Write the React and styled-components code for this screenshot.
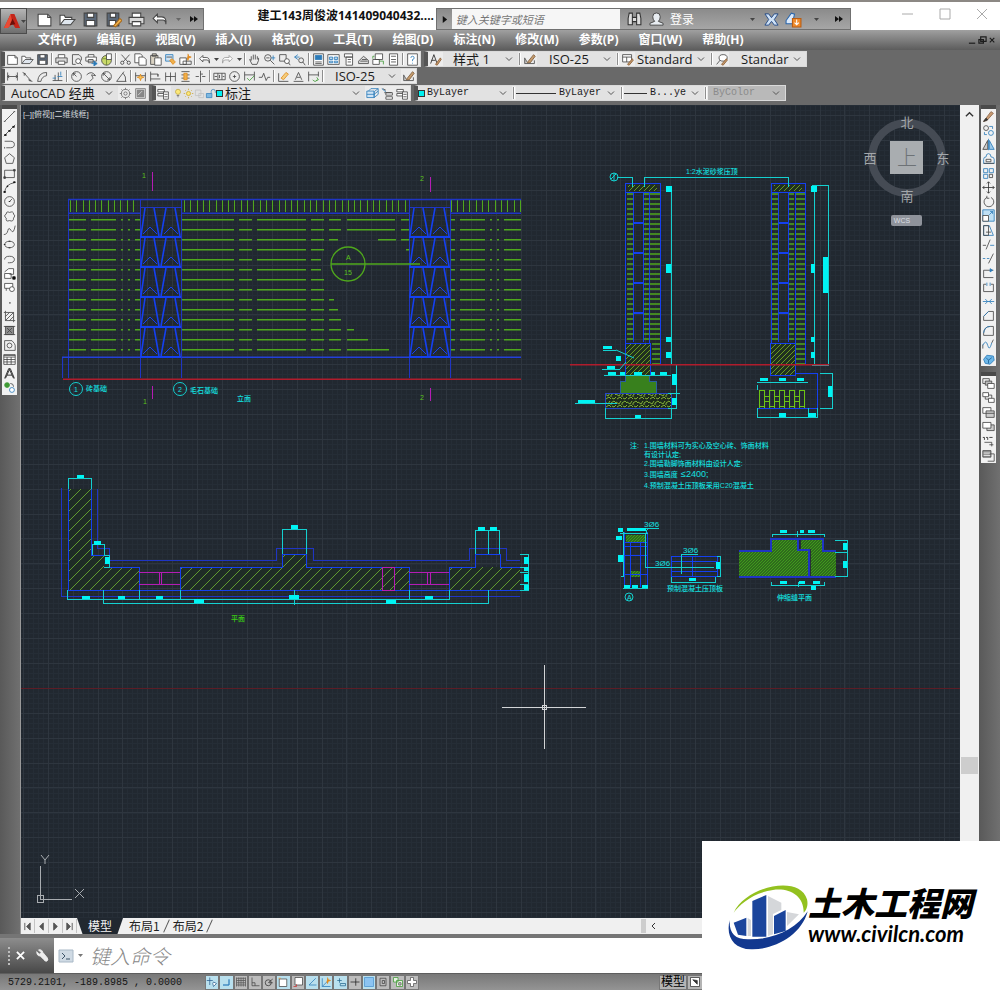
import React from "react";
import styled, { createGlobalStyle } from "styled-components";

const GlobalStyle = createGlobalStyle`
  * {
    box-sizing: border-box;
  }
  body {
    margin: 0;
    background: #696969;
    font-family: "Open Sans", "Noto Sans CJK SC", sans-serif;
  }
  button, input, select {
    font-family: inherit;
    margin: 0;
    padding: 0;
    border: 0;
    background: none;
    outline: none;
  }
`;

const UI = '"Open Sans", "Noto Sans CJK SC", sans-serif';
const MONO = '"Liberation Mono", "Noto Sans CJK SC", monospace';
const K = "#454545";
const B = "#2b7bb9";
const O = "#e08a1e";
const G = "#3f9a35";

/* every icon is a list of [path, stroke, fill] on a 16 x 16 grid */
const ICONS = {
  file: [["M2 3h9l3 3v8H2z", K, "#fff"], ["M11 3v3h3"]],
  open: [["M1 13V4h4l1 2h6v2", K, "#fff"], ["M1 13l4-5h10l-4 5z", K, "#dfe6ee"]],
  save: [["M2 2h12v12H2z", K, "#5b6878"], ["M5 2h6v4H5zM4 9h8v5H4z", K, "#fff"]],
  printer: [["M4 6V2h8v4", K, "#fff"], ["M1 6h14v6H1z", K, "#d8d8d8"], ["M4 10h8v4H4z", K, "#fff"]],
  preview: [["M3 14V2h8l3 3v4M3 14h4"], ["M7 10a3 3 0 1 0 6 0a3 3 0 1 0-6 0M12 12l3 3", K, "#fff"]],
  plot: [["M4 5V2h7v3M1 5h13v5H1zM4 8h6v4H4z", K, "#fff"], ["M8 13h6M11 10l4 3-4 3z", B, B]],
  globe: [["M2 9a6 6 0 1 0 12 0a6 6 0 1 0-12 0", K, "#c9d86a"], ["M3 7h10M8 3v12", "#6f8a30"], ["M8 1h6v7H8z", K, "#fff"]],
  cut: [["M3 2l8 9M13 2L5 11"], ["M2 12a2 2 0 1 0 4 0a2 2 0 1 0-4 0M10 12a2 2 0 1 0 4 0a2 2 0 1 0-4 0"]],
  copy: [["M1 1h7l2 2v9H1z", K, "#fff"], ["M6 5h6l3 3v7H6z", K, "#fff"]],
  paste: [["M2 3h9v11H2zM4 1h5v3H4z", K, "#d9d2c2"], ["M7 6h8v9H7z", K, "#fff"]],
  match: [["M2 2h9v8H2z", B, "#cfe4f5"], ["M3 5h7", K], ["M7 9l4 5 3-3-4-4z", O, "#f0b04a"]],
  block: [["M1 6h8v8H1z", K, "#fff"], ["M5 10h10v4H5z"], ["M11 1l1 3 3 1-3 1-1 3-1-3", O, O]],
  undo: [["M6 3L2 7l4 4V8.500h5q3 0 3 4 1-7-4-7H6z", K, "#fff"]],
  redo: [["M10 3l4 4-4 4V8.500H5q-3 0-3 4-1-7 4-7h4z", "#9a9a9a", "#fff"]],
  hand: [["M4 9V4M6.500 8V2M9 8V2M11.500 8V4M4 9L2 8l3 6h6l2-5V6"]],
  zoom: [["M2 6a4 4 0 1 0 8 0a4 4 0 1 0-8 0M9 9l5 5M4 6h4"], ["M10 6h5M12.500 3v6", B]],
  zoomWin: [["M2 2h8v8H2z"], ["M8 10a3 3 0 1 0 6 0a3 3 0 1 0-6 0M13 12l2 3", K, "#fff"]],
  zoomPrev: [["M7 9a3 3 0 1 0 6 0a3 3 0 1 0-6 0M12 11l3 4"], ["M6 2L2 5l4 3", B], ["M2 5h6", B]],
  props: [["M2 1h12v14H2z", K, "#fff"], ["M4 3h8v5H4z", B, B], ["M4 11h8M4 13h8"]],
  center: [["M1 2h14v12H1z", K, "#fff"], ["M3 5h4v3H3zM9 5h4v3H9zM3 10h4v2H3zM9 10h4v2H9z", B, "#bcd8ef"]],
  palette: [["M3 1h10v4H3zM5 5h8v10H5z", K, "#fff"], ["M7 8h4M7 11h4"]],
  sheet: [["M2 10l6-6 6 5v4H2z", K, "#ddd"], ["M4 10h9M6 8h6"]],
  markup: [["M4 1h9v7H4zM1 8h8v6H1z", K, "#fff"], ["M9 10h5v4M3 4H1v3", G]],
  calc: [["M3 1h10v14H3z", K, "#fff"], ["M5 4h6M5 8h6M5 11h6"]],
  help: [["M2 1h12v14H2z", K, "#fff"], ["M6 6q0-2 2-2t2 2q0 2-2 2v2M8 12v1", B]],
  dimLinear: [["M2 3v10M14 3v10M2 8h12M4 6L2 8l2 2M12 6l2 2-2 2"]],
  dimAligned: [["M2 3l4 2M10 13l4 1M4 4l8 9M4 4v3M12 13l-3-1"]],
  dimArc: [["M2 14Q3 3 13 3M6 14Q7 8 13 7M2 14h4M13 3v4"]],
  dimOrd: [["M2 13h12M5 13V6M9 13V3"], ["M2 10h4M8 8h6M12 2v5", B]],
  radius: [["M2 8a6 6 0 1 0 12 0a6 6 0 1 0-12 0M8 8L4 4M4 7V4h3"]],
  jog: [["M2 6q6-6 11 1M13 7L8 6l2 4-4 4"]],
  diameter: [["M2 8a6 6 0 1 0 12 0a6 6 0 1 0-12 0M4 4l8 8M4 7V4h3M12 9v3H9"]],
  angular: [["M2 14L11 2M2 14h12M10 4q4 4 3 10"]],
  quick: [["M2 3v11M14 3v11M2 7h12"], ["M8 5l1 3 3 1-3 1-1 3-1-3-3-1 3-1z", O, "#f6c65a"]],
  baseline: [["M2 2v12M2 5h9v3M2 11h12M11 5v3"]],
  cont: [["M2 3v11M8 3v11M14 3v11M2 8h12"]],
  space: [["M3 2h10M3 14h10M3 6h10M3 10h10"], ["M6 4h4v8H6z", O, "#f0b04a"]],
  brk: [["M8 1v14M2 8h4M10 8h4M8 5h3"]],
  toler: [["M1 4h14v8H1zM6 4v8M11 4v8M2 8h3M8 6v4M12 8h2"]],
  centerMark: [["M2 8a6 6 0 1 0 12 0a6 6 0 1 0-12 0M8 6v4M6 8h4"]],
  inspect: [["M2 2v11M14 2v11M2 6h12"], ["M5 10l3 3 6-6", G]],
  jogLine: [["M1 9h4l2-5 3 9 2-4h3"]],
  dimEdit: [["M2 4v10h12"], ["M5 10l6-7 3 2-6 7z", O, "#f4ce7c"]],
  textEdit: [["M2 14h12M4 12l4-9 4 9M6 9h4"]],
  update: [["M2 2v12M14 2v6M2 6h12"], ["M7 12q3 4 6 0M12 9l2 3-3 1", G]],
  brush: [["M2 13V6l3 5", "#555", "#bbb"], ["M5 12l8-10 2 2-6 8z", "#7a5a3a", "#c69c6d"], ["M2 13h12V9", K]],
  styleA: [["M2 13L6 2l4 11M3 9h5", "#222"], ["M8 14l6-8 1 2-5 7z", "#8a5a30", "#c69c6d"]],
  tableStyle: [["M2 2h11v9H2zM2 5h11M7 5v6", K, "#fff"], ["M8 14l6-7 1 2-5 6z", "#8a5a30", "#c69c6d"]],
  leader: [["M2 14l5-6"], ["M5 6q0-4 5-4t5 4-5 4-5-4", K, "#fff"], ["M8 14l6-7 1 2-5 6z", "#8a5a30", "#c69c6d"]],
  gear: [["M3 8a5 5 0 1 0 10 0a5 5 0 1 0-10 0M6 8a2 2 0 1 0 4 0a2 2 0 1 0-4 0M8 1v2M8 13v2M1 8h2M13 8h2M3 3l1 1M12 12l1 1M13 3l-1 1M4 12l-1 1", "#666"]],
  space2: [["M2 2h12v12H2z", "#777", "#ddd"], ["M4 4h8v8H4z", "#777", "#888"], ["M5 10l5-5", "#ddd"]],
  layers: [["M1 3h8v3H1zM1 8h8v3H1z", K, "#fff"], ["M8 6h6v9H8zM9 9h4M9 12h4", K, "#fff"]],
  bulb: [["M4 6a4 4 0 1 1 8 0q0 2-2 4H6Q4 8 4 6z", "#b39a2c", "#fbe779"], ["M6 12h4M7 14h2"]],
  sun: [["M5 8a3 3 0 1 0 6 0a3 3 0 1 0-6 0", "#c9a020", "#fbe779"], ["M8 1v2M8 13v2M1 8h2M13 8h2M3 3l1 1M12 12l1 1M13 3l-1 1M4 12l-1 1", "#c9a020"]],
  faint: [["M2 3h8v8H2zM7 8h7v6H7z", "#bdbdbd"]],
  lock: [["M2 8h8v6H2z", B, "#7fb8e0"], ["M9 8V5q0-3 3-3t3 3v2", B]],
  layerA: [["M1 13h9V5H1z", B, "#cfe4f5"], ["M3 5l3-3h9l-4 3M10 13l5-4V2M10 9l5-4M1 9h9M10 5v8", B]],
  layerB: [["M2 2l4 2M4 7h9M6 7h8v3H6zM6 12h8v3H6z", K, "#fff"], ["M1 2l5 4", B]],
  line: [["M2 14L14 2"], ["M1 14h2M13 2h2"]],
  xline: [["M1 15L15 1"], ["M2 13h2v1H2zM7 8h2v1H7zM12 3h2v1h-2z", "#111", "#111"]],
  pline: [["M2 4h7q5 0 5 4t-5 4H4M2 11v2"]],
  polygon: [["M8 2l6 5-2 7H4L2 7z"]],
  rect: [["M2 4h12v9H2z"], ["M1 12h2v2H1zM13 3h2v2h-2z", K, K]],
  arc: [["M2 14Q3 4 14 2"], ["M1 13h2v1H1zM5 6h1v1H5zM13 1h2v1h-2z", "#111", "#111"]],
  circle: [["M2 8a6 6 0 1 0 12 0a6 6 0 1 0-12 0M8 8l3-3"], ["M7 8h2", "#111"]],
  cloud: [["M4 5q0-4 4-2 5-2 5 2 3 2 0 5 0 5-5 3-5 2-4-3-4-3 0-5z"]],
  spline: [["M1 13q4 0 5-5t4 0 5-6"]],
  ellipse: [["M2 8a6 4 0 1 0 12 0a6 4 0 1 0-12 0"], ["M7 4h2M7 12h2M1 8h2", "#111"]],
  ellArc: [["M2 8q0-4 6-4t6 4-6 4M6 12h2"]],
  insert: [["M2 6l5-4h6v7H8M2 8h8v6H2z", K, "#fff"], ["M12 12h3v3h-3z", "#111", "#111"]],
  makeBlock: [["M2 3h10v6H2z", K, "#fff"], ["M8 10a3 3 0 1 0 6 0a3 3 0 1 0-6 0M4 9v3", K, "#fff"]],
  point: [["M8 8h1v1H8z", "#555"]],
  hatch: [["M3 3h10v10H3zM3 8l5-5M3 13L13 3M8 13l5-5M1 3h2M13 13h2M3 1v2M13 13v2"]],
  gradient: [["M3 3h10v10H3z", K, "#8d8d8d"], ["M1 3h14M1 13h14M5 5l6 6M11 5l-6 6"]],
  region: [["M2 2h9q4 4 4 6v6H2z"], ["M5 8a3 3 0 1 0 6 0a3 3 0 1 0-6 0"]],
  table: [["M1 2h14v12H1z", K, "#fff"], ["M1 5h14M5 5v9M10 5v9M1 8h14M1 11h14"], ["M1 3h14", K]],
  mtext: [["M2 14L7 2h2l5 12M5 10h6M3 14L8 3l5 11", "#111"]],
  addSel: [["M2 5a3 3 0 1 0 6 0a3 3 0 1 0-6 0", G, G], ["M8 11a3 3 0 1 0 6 0a3 3 0 1 0-6 0", B, "#fff"], ["M9 3q4 0 4 4"]],
  erase: [["M2 14l9-12 3 2-8 9z", "#8a6446", "#c79a72"], ["M2 14l3-4 2 2z", "#333", "#333"]],
  copyObj: [["M2 5a3 3 0 1 0 6 0a3 3 0 1 0-6 0"], ["M8 11a3 3 0 1 0 6 0a3 3 0 1 0-6 0M9 3h4v3M3 10v3h3", B]],
  mirror: [["M7 3v11H1z", K, "#ccc"], ["M9 3v11h6z", B, "#9cc9ea"], ["M8 1v14", B]],
  offset: [["M2 14V9q0-3 3-3 0-4 3-4t3 4q4 0 4 3v5z", B], ["M5 12h6V9H5z"], ["M2 14h13", K]],
  array: [["M2 2h5v5H2zM9 2h5v5H9zM2 9h5v5H2z", B], ["M9 9h4v4H9z", K]],
  move: [["M8 1v14M1 8h14M6 3l2-2 2 2M6 13l2 2 2-2M3 6L1 8l2 2M13 6l2 2-2 2", "#333"]],
  rotate: [["M6 3a6 6 0 1 0 5 0M6 1v3h3"]],
  scale: [["M1 1h14v14H1z", B, "#bfe0f5"], ["M1 8h7v7H1z", K, "#fff"], ["M9 7l4-4M10 3h3v3", B]],
  stretch: [["M2 2h7l5 12H2z", B], ["M2 14V2h6v12z", K], ["M5 10h6"]],
  trim: [["M1 9h4", K], ["M10 9h5", B], ["M5 14L10 2"]],
  extend: [["M1 8h3M6 8h3", B], ["M8 14L14 2"]],
  breakPt: [["M14 4H2v9h12", K], ["M10 2l3 2-3 2z", B, B]],
  breakObj: [["M5 4H2v9h12V4h-3"], ["M6 2v4M10 2v4", B]],
  join: [["M1 8h14", B], ["M4 5l3 3-3 3M12 5L9 8l3 3", B]],
  chamfer: [["M2 14V9l6-6h6v11z"], ["M2 9l6-6", B]],
  fillet: [["M2 14V11q1-8 8-8h4v11z"], ["M2 11q1-8 8-8", B]],
  blend: [["M1 13V8"], ["M1 9q4-8 6 0t5-3", B], ["M12 6l2-4"]],
  explode: [["M2 9l4-5 8 1 1 5-5 5-6-1z", B, "#6db7e8"], ["M5 7l3 3 4-3M8 10v4", "#1c5f94"]],
  front: [["M1 2h8v6H1z", K, "#eee"], ["M4 5h8v5H4z", K, "#bbb"], ["M7 8h8v6H7z", K, "#fff"]],
  back: [["M4 5h8v5H4z", K, "#eee"], ["M1 2h7v5H1zM8 9h7v5H8z", K, "#fff"]],
  above: [["M1 2h10v7H1z", K, "#fff"], ["M5 6h10v8H5z", K, "#ccc"], ["M5 9h10"]],
  under: [["M6 6h9v7H6z", K, "#ccc"], ["M1 3h10v7H1z", K, "#fff"]],
  annot: [["M1 3h2v3M5 3h2v3M9 3h4", "#222"], ["M3 9h9v5M9 12h5"]],
  hatchBack: [["M1 2h10v8H1z", K, "#999"], ["M9 6h6v9H7"], ["M2 5h8M2 8h8", "#eee"]],
  snap: [["M5 2v10M1 6h8M10 8l4 2-4 4-1-4z", "#2b5f8f", "#fff"]],
  corner: [["M12 4v8H4M12 5v7H4", B]],
  grid: [["M2 2v12M5 2v12M8 2v12M11 2v12M14 2v12M2 3h12M2 6h12M2 9h12M2 12h12", "#555"]],
  ortho: [["M4 2v11h10M4 9h4v4"]],
  polar: [["M3 9a4 4 0 1 0 8 0a4 4 0 1 0-8 0M7 9l6-5M13 9H8", "#333"]],
  osnap: [["M3 4h10v10H3z", K, "#fff"], ["M2 3h3", O]],
  osnap3: [["M4 2h10v10H4z", K, "#fff"], ["M2 14h4v-3", "#c33"]],
  otrack: [["M13 3L4 12h10", B]],
  ducs: [["M3 3v11h11M3 14l6-6", B], ["M10 2l1 3 3 1-3 1-1 3-1-3", O, O]],
  dyn: [["M3 6h6M6 3v6M7 10h7v3H7z", "#26688f"]],
  lwt: [["M2 8h12M9 3v10", "#222"]],
  tpy: [["M2 2h12v12H2z", "#4c94cf", "#8cc4f2"]],
  qp: [["M4 3h8v10H4zM7 6h3v4H7z", "#444"]],
  sc: [["M2 2h6v6H2zM6 6h8v8H6z", G, "#e8f2e4"], ["M9 9h3v3H9z", K]],
  am: [["M6 2h4v4h4v4h-4v4H6v-4H2V6h4z", "#555", "#fff"]],
  model: [["M2 2h12v12H2z", "#333", "#fff"], ["M5 5l6 6V6z", "#333", "#333"]],
  binoculars: [["M2 13V7l1-5h3v11zM14 13V7l-1-5h-3v11zM6 6h4v4H6z", "#333", "#ddd"]],
  user: [["M4 5a4 4 0 1 1 8 0q0 3-2 5l5 2v2H1v-2l5-2Q4 8 4 5z", "#444", "#e8edf2"]],
  exchange: [["M1 2h4l3 4 3-4h4l-4 6 4 6h-4l-3-4-3 4H1l4-6z", "#234a86", "#cfe2f7"]],
  cloudDown: [["M1 12V9l5-7 3 1-1 4h5v5z", "#2b67ad", "#dceafa"], ["M7 7h8v8H7z", "#b95c12", "#ee8a2a"], ["M11 8v5M9 11l2 2 2-2", "#fff"]],
  wrench: [["M2 3l3 3 2-2-3-3q4-1 5 3l5 6q2 3-1 4-2 0-3-2L6 8Q2 8 2 3z", "#eee", "#eee"]],
  prompt: [["M1 2h14v12H1z", "#a8b8c6", "#cfdae4"], ["M4 5l3 3-3 3M8 11h4", "#3d5468"]],
  editSave: [["M2 2h11v12H2z", K, "#5b6878"], ["M5 2h5v4H5zM4 9h6v5H4z", K, "#fff"], ["M8 14l6-7 2 2-6 6z", "#a6681b", "#f2b24a"]],
};

const Svg = styled.svg`
  display: block;
  flex: none;
  width: ${(p) => p.$size}px;
  height: ${(p) => p.$size}px;
`;

const Icon = ({ name, size = 13 }) => (
  <Svg $size={size} viewBox="0 0 16 16" aria-hidden="true">
    {ICONS[name].map(([d, stroke = K, fill = "none"], i) => (
      <path key={i} d={d} stroke={stroke} fill={fill} strokeWidth="1" />
    ))}
  </Svg>
);

const Page = styled.div`
  position: relative;
  display: flex;
  flex-direction: column;
  background: #696969;
  overflow: hidden;
`;

const TitleBar = styled.header`
  display: flex;
  align-items: stretch;
  height: 30px;
  padding-top: 6px;
  background: #fff;
  border-top: 2px solid #8c8884;
`;

const AppButton = styled.button`
  position: relative;
  z-index: 1;
  display: flex;
  align-items: center;
  width: 27px;
  height: 26px;
  padding-left: 3px;
  border: 1px solid #4c4c4c;
  background: linear-gradient(#b5b5b5, #6e6e6e);
`;

const QuickAccess = styled.div`
  display: flex;
  align-items: center;
  width: 177px;
  padding-left: 6px;
  background: linear-gradient(#8b8b8b, #a6a6a6);
  border: 1px solid #707070;
  border-left: 0;
`;

const QuickButton = styled.button`
  display: flex;
  align-items: center;
  justify-content: center;
  width: ${(p) => (p.$narrow ? 15 : 23)}px;
  height: 20px;
  color: #222;
  font-size: 11px;
`;

const Title = styled.h1`
  flex: 1;
  margin: 0;
  padding-right: 2px;
  color: #111;
  font-size: 12px;
  font-weight: 700;
  line-height: 16px;
  text-align: right;
  white-space: nowrap;
`;

const InfoCenter = styled.div`
  display: flex;
  align-items: center;
  width: 415px;
  background: linear-gradient(#8b8b8b, #a6a6a6);
  border: 1px solid #707070;
`;

const Search = styled.input`
  width: 172px;
  height: 20px;
  margin-right: 4px;
  padding-left: 4px;
  background: #f6f6f6;
  font-size: 11px;
  font-style: italic;
  &::placeholder {
    color: #777;
    opacity: 1;
  }
`;

const SignIn = styled.button`
  display: flex;
  align-items: center;
  gap: 6px;
  width: 102px;
  padding-left: 3px;
  color: #fff;
  font-size: 12px;
`;

const WindowButtons = styled.div`
  display: flex;
  justify-content: flex-end;
  width: 149px;
`;

const WindowButton = styled.button`
  display: flex;
  justify-content: center;
  width: 37px;
  height: 12px;
`;

const MenuBar = styled.nav`
  display: flex;
  align-items: center;
  gap: 20px;
  height: 20px;
  padding: 0 3px 0 38px;
  background: linear-gradient(#a0a0a0, #5c5c5c);
`;

const MenuLink = styled.a`
  color: #fff;
  font-size: 12px;
  font-weight: 700;
  line-height: 20px;
  text-decoration: none;
  white-space: nowrap;
`;

const DocButtons = styled.div`
  display: flex;
  gap: 1px;
  margin-left: auto;
`;

const ToolbarArea = styled.div`
  display: flex;
  flex-direction: column;
  gap: 1px;
  padding: 1px 0 4px;
`;

const ToolbarRow = styled.div`
  display: flex;
  gap: 3px;
  padding-left: 1px;
`;

const Toolbar = styled.div`
  display: flex;
  align-items: center;
  height: 16px;
  background: #ececec;
  border: 1px solid #dadada;
  border-left: 4px solid #555;
`;

const ToolButton = styled.button`
  display: flex;
  align-items: center;
  justify-content: center;
  flex: none;
  width: ${(p) => p.$width || 15}px;
  height: 14px;
`;

const Divider = styled.span`
  width: 2px;
  height: 12px;
  margin: 0 1px;
  border-left: 1px solid #8e8e8e;
  border-right: 1px solid #fff;
`;

const Combo = styled.label`
  display: flex;
  align-items: center;
  width: ${(p) => p.$width}px;
  height: 14px;
  padding: 0 5px 0 ${(p) => p.$pad || 0}px;
  background: ${(p) => (p.$off ? "#b9b9b9" : "#e2e2e2")};
  overflow: hidden;
`;

const Select = styled.select`
  flex: 1;
  min-width: 0;
  height: 14px;
  appearance: none;
  color: ${(p) => (p.disabled ? "#8b8b8b" : "#1b1b1b")};
  opacity: 1;
  font-family: ${(p) => (p.$mono ? MONO : UI)};
  font-size: ${(p) => (p.$mono ? 10 : 13)}px;
  line-height: 14px;
`;

const Swatch = styled.span`
  flex: none;
  width: 7px;
  height: 7px;
  margin-right: 2px;
  background: #00f0f0;
  border: 1px solid #333;
`;

const LinePreview = styled.span`
  flex: none;
  width: ${(p) => p.$width}px;
  height: 1px;
  margin-right: 3px;
  background: #333;
`;

const Chevron = () => (
  <Svg $size={8} viewBox="0 0 8 8" aria-hidden="true">
    <path d="M1 2.500L4 5.500L7 2.500" fill="none" stroke="#555" />
  </Svg>
);

const Workspace = styled.main`
  display: flex;
  align-items: stretch;
`;

const Dock = styled.aside`
  flex: none;
  display: flex;
  flex-direction: column;
  gap: 6px;
  width: ${(p) => p.$width}px;
  padding: 0 0 0 2px;
  background: linear-gradient(90deg, #595959, #707070);
`;

const Palette = styled.div`
  display: flex;
  flex-direction: column;
  align-items: center;
  justify-content: space-between;
  width: 15px;
  height: ${(p) => p.$height}px;
  background: #f1f1f1;
  border-top: 4px solid #4a4a4a;
`;

const Viewport = styled.section`
  flex: 1;
  min-width: 0;
  border-left: 1px solid #9a9a9a;
`;

const Canvas = styled.svg`
  display: block;
  width: 100%;
  background: #212830;
`;

const ScrollTrack = styled.div`
  display: flex;
  flex-direction: column;
  align-items: center;
  flex: none;
  width: 19px;
  padding-top: 5px;
  background: #f0f0f0;
`;

const ScrollThumb = styled.span`
  width: 17px;
  height: 17px;
  margin-top: 638px;
  background: #cdcdcd;
`;

const TabBar = styled.div`
  display: flex;
  align-items: center;
  height: 16px;
  background: #f0f0f0;
`;

const StepButton = styled.button`
  display: flex;
  align-items: center;
  justify-content: center;
  width: 14px;
  height: 14px;
  border-right: 1px solid #c4c4c4;
`;

const Tab = styled.button`
  height: 16px;
  padding: 0 ${(p) => (p.$active ? 11 : 6)}px;
  color: ${(p) => (p.$active ? "#f4f4f4" : "#222")};
  background: ${(p) => (p.$active ? "#212830" : "none")};
  clip-path: ${(p) => (p.$active ? "polygon(0 0, 100% 0, 88% 100%, 12% 100%)" : "none")};
  font-family: "Noto Sans CJK SC", sans-serif;
  font-size: 12px;
  line-height: 14px;
`;

const Slash = styled.span`
  width: 1px;
  height: 14px;
  background: #555;
  transform: rotate(24deg);
`;

const HScroll = styled.div`
  display: flex;
  align-items: center;
  width: 319px;
  height: 14px;
  margin-left: auto;
  padding-left: 4px;
  border-left: 5px solid #cdcdcd;
`;

const CommandLine = styled.div`
  display: flex;
  height: 39px;
  background: #fff;
  border-top: 4px solid #757575;
`;

const CommandGrip = styled.div`
  display: flex;
  align-items: center;
  gap: 6px;
  width: 54px;
  padding-left: 8px;
  background: linear-gradient(#8d8d8d, #484848);
`;

const Dots = styled.span`
  height: 18px;
  border-left: 2px dotted #bdbdbd;
`;

const GripButton = styled.button`
  display: flex;
  margin-right: ${(p) => p.$gap || 0}px;
`;

const PromptButton = styled.button`
  display: flex;
  align-items: center;
  gap: 4px;
  width: 36px;
  padding-left: 4px;
`;

const CommandInput = styled.input`
  flex: 1;
  font-family: "Noto Sans CJK SC", sans-serif;
  font-size: 20px;
  font-style: italic;
  font-weight: 300;
  &::placeholder {
    color: #888;
    opacity: 1;
  }
`;

const StatusBar = styled.footer`
  display: flex;
  align-items: center;
  height: 17px;
  padding-left: 8px;
  background: linear-gradient(#787878, #949494);
  border-top: 1px solid #5e5e5e;
`;

const Coords = styled.span`
  width: 197px;
  color: #151515;
  font-family: ${MONO};
  font-size: 10px;
  white-space: pre;
`;

const StatusGroup = styled.div`
  display: flex;
  width: 214px;
`;

const StatusButton = styled.button`
  display: flex;
  align-items: center;
  justify-content: center;
  flex: 1;
  height: 15px;
  border: 1px solid #777;
  background: ${(p) => (p.$on ? "#b9e0ee" : "#bcbcbc")};
`;

const ModelGroup = styled.div`
  display: flex;
  align-items: center;
  width: 341px;
  margin-left: auto;
`;

const ModelButton = styled.button`
  display: flex;
  align-items: center;
  height: 15px;
  padding: 0 1px;
  background: #b4b4b4;
  border: 1px solid #777;
  font-size: 12px;
  line-height: 14px;
`;

const Watermark = styled.div`
  position: absolute;
  right: 0;
  bottom: 0;
  display: flex;
  align-items: center;
  width: 298px;
  height: 149px;
  padding-left: 26px;
  background: #fff;
`;

const BrandText = styled.div`
  display: flex;
  flex-direction: column;
  color: #000;
  font-style: italic;
  white-space: nowrap;
`;

const BrandName = styled.strong`
  font-family: "Liberation Sans", "Noto Sans CJK SC", sans-serif;
  font-size: 33px;
  font-weight: 900;
  line-height: 36px;
`;

const BrandUrl = styled.span`
  font-family: Lato, "Open Sans", sans-serif;
  font-size: 22px;
  font-weight: 700;
  line-height: 22px;
`;

/* ---- model space ---- */

const BLUE = "#1440f0";
const NAVY = "#1f35c4";
const GREEN = "#4fa81c";
const CYAN = "#14d0d0";
const MAGENTA = "#b41cb4";
const RED = "#b01c2c";

const range = (a, b, step) => {
  const out = [];
  for (let v = a; v <= b; v += step) out.push(v);
  return out;
};

const rowsPath = (segs, y) => segs.map(([a, b]) => `M${a} ${y}H${b}`).join("");

const minorGrid =
  range(22.8, 960, 4.98).map((x) => `M${Math.round(x)} 105V918`).join("") +
  range(105.4, 918, 4.98).map((y) => `M21 ${Math.round(y)}H960`).join("");
const majorGrid =
  range(22.8, 960, 24.9).map((x) => `M${Math.round(x)} 105V918`).join("") +
  range(115.2, 918, 24.9).map((y) => `M21 ${Math.round(y)}H960`).join("");

const brickEdge = [...range(70, 136, 6.3), ...range(184, 409, 6.3), ...range(450.5, 521, 6.3)]
  .map((x) => `M${Math.round(x)} 200V212`)
  .join("");

const wallSegs = [
  [68, 86], [91, 116], [121, 123], [128, 130], [135, 140],
  [182, 234], [239, 252], [257, 306], [311, 321],
  [451, 455], [460, 485], [490, 492], [497, 499], [504, 521],
];
const wallExtra = [
  [[321, 324], [329, 341], [347, 395], [401, 409]],
  [[321, 324], [329, 341], [347, 395], [401, 409]],
  [[321, 324], [329, 338], [378, 396], [401, 409]],
  [[321, 324], [406, 409]],
  [],
  [],
  [[321, 324]],
  [[321, 324]],
  [[321, 324], [329, 334]],
  [[321, 324], [329, 338]],
  [[321, 324], [329, 341]],
  [[321, 324], [329, 341], [347, 354]],
  [[321, 324], [329, 341], [347, 368]],
  [[321, 324], [329, 341], [347, 389]],
];
const wallRows = wallExtra.map((extra, i) => rowsPath([...wallSegs, ...extra], 219.8 + i * 10)).join("");

const Boxes = ({ list }) =>
  list.map(([x, y, w, h], i) => <rect key={i} x={x} y={y} width={w} height={h} fill="#00f4f4" />);

const Pillar = ({ x }) => (
  <g transform={`translate(${x} 207)`} fill="none" stroke={BLUE}>
    <path d="M0.500 -8V171M41.500 -8V171M0 0.500H41" stroke={NAVY} />
    {range(0, 120, 30).map((y) => (
      <g key={y} transform={`translate(0 ${y})`}>
        <path d="M1 29L5 1M14 1L19 29M21 29L26 1M35 1L40 29" strokeWidth="1.6" />
        <path d="M3 27L10 20L17 27M24 27L31 20L38 27" />
        <path d="M0 30H41" strokeWidth="2" />
      </g>
    ))}
  </g>
);

const Elevation = () => (
  <g fill="none">
    <path d={wallRows} stroke={GREEN} strokeWidth="1.4" />
    <path d={brickEdge} stroke={GREEN} shapeRendering="crispEdges" />
    <path d="M68 199.600H521M68 213.300H140M181 213.300H409M450 213.300H521" stroke={NAVY} strokeWidth="1.5" />
    <path d="M68 199V378M62 357V378" stroke={NAVY} shapeRendering="crispEdges" />
    <path d="M62 357.200H521" stroke="#2340d8" strokeWidth="1.5" />
    <path d="M63 379.300H521" stroke={RED} strokeWidth="1.5" />
    <path d="M152 172V191M152 386V399M430 177V192M430 388V401" stroke={MAGENTA} shapeRendering="crispEdges" />
    <Pillar x={140} />
    <Pillar x={409} />
    <circle cx="348" cy="264" r="17" stroke={GREEN} strokeWidth="1.3" />
    <path d="M331 264H420" stroke={GREEN} strokeWidth="1.4" />
    <circle cx="76" cy="389" r="6.500" stroke={CYAN} />
    <circle cx="180" cy="389" r="6.500" stroke={CYAN} />
  </g>
);

const rungs = (cols, from, to) =>
  range(from, to, 5).map((y) => cols.map(([a, b]) => `M${a} ${y}H${b}`).join("")).join("");

const Sections = () => (
  <g fill="none">
    <path
      d={
        rungs([[627, 633], [643, 660], [772, 778], [788, 794], [796, 805]], 194, 341) +
        rungs([[652, 660], [796, 805]], 344, 364)
      }
      stroke={GREEN}
      strokeWidth="1.3"
    />
    <g shapeRendering="crispEdges">
      <path d="M625 183H660V365M625 183V375M633 192V342M643 192V342M649 192V375M625 192H660" stroke={BLUE} />
      <path d="M771 183H805V365M771 183V375M778 192V342M788 192V342M795 192V375M771 192H805M795 373H817V408" stroke={BLUE} />
      <path d="M633 223H643M633 253H643M633 283H643M633 313H643M778 223H788M778 253H788M778 283H788M778 313H788" stroke={BLUE} strokeWidth="2" />
      <rect x="628" y="185" width="29" height="6" fill="url(#hatchFine)" />
      <rect x="774" y="185" width="28" height="6" fill="url(#hatchFine)" />
      <rect x="625" y="343" width="25" height="32" fill="url(#hatchFine)" stroke={BLUE} />
      <rect x="770" y="343" width="25" height="32" fill="url(#hatchFine)" stroke={BLUE} />
      <path d="M625 375H649V381H656V393H620V381H625Z" fill="#38801d" stroke="#2a5fa0" />
      <rect x="605" y="393" width="66" height="15" fill="url(#gravel)" stroke="#2446c8" />
      <path d="M757 408H817" stroke={BLUE} />
      <path
        d="M759 390V408M764 390V408M769 390V408M774 390V408M779 390V408M784 390V408M789 390V408M794 390V408M799 390V408M804 390V408M759 390H764M769 390H774M779 390H784M789 390H794M799 390H804M764 396H769M774 396H779M784 396H789M794 396H799M759 406H764M769 406H774M779 406H784M789 406H794M799 406H804M764 401H769M774 401H779M784 401H789M794 401H799"
        stroke="#6cc414"
      />
      <path
        d="M617 177H632V187M644 187V177H788V187M671 187V365M814 187V365M812 185H828V365H812M605 408V418H671V408M604 375H671M676 364V408H668M668 393H680M575 403H617M603 350H616M602 369H620M757 382H808M757 385V390M757 408V417H817V408M808 408V417M820 373H832V408H820"
        stroke={CYAN}
      />
    </g>
    <path d="M570 364.800H829" stroke={RED} strokeWidth="1.5" />
    <path d="M616 350L634 358M620 369L626 362" stroke={CYAN} />
    <circle cx="614" cy="177" r="4" stroke={CYAN} />
    <path d="M611 179L616 174M614 173V181" stroke={CYAN} />
    <Boxes
      list={[
        [666, 186, 6, 6], [666, 264, 5, 9], [666, 337, 5, 5], [666, 352, 5, 6],
        [811, 186, 6, 6], [811, 264, 4, 9], [811, 337, 4, 5], [811, 352, 4, 6], [823, 257, 5, 36],
        [603, 346, 9, 3], [607, 366, 8, 3], [616, 356, 5, 5],
        [608, 372, 8, 3], [620, 372, 5, 3], [634, 372, 8, 3], [651, 372, 4, 3], [660, 372, 7, 3],
        [672, 374, 5, 11], [672, 398, 5, 7], [578, 400, 17, 3], [635, 415, 6, 3],
        [760, 378, 8, 3], [779, 378, 7, 3], [797, 378, 7, 3], [779, 413, 7, 4], [808, 413, 8, 4], [828, 386, 4, 11],
      ]}
    />
  </g>
);

const Plan = () => (
  <g fill="none" shapeRendering="crispEdges">
    <path d="M68 489H91V555H104V567H139V590H68Z" fill="url(#hatch)" />
    <path d="M180 567H282V554H306V567H409V590H180Z" fill="url(#hatch)" />
    <path d="M449 567H520V590H449Z" fill="url(#hatch)" />
    <path d="M68 489V590H139V567H109M91 489V555H104M180 567H282V554H306V567H409V590H180ZM139 590H180M409 590H449M449 590V567H475V554H500V567H520M449 590H520" stroke={BLUE} />
    <path d="M61 488V596H520M97 489V548H109V560H276V548H313V560H469V548H506V560H520" stroke={NAVY} />
    <path d="M139 572H180M139 584H180M159 572V584M161 572V584M409 572H449M409 584H449M427 572V584M430 572V584M382 567H394V590H382Z" stroke={MAGENTA} />
    <path
      d="M68 489V478H91V489M92 555V544H104V555H109V567H104M282 554V529H306V554M475 554V530H499V554M488 530V554M67 590V599H449V590M103 590V603H488V590M139 590V599M180 590V599M294 590V605M409 590V599M520 554H528V590H520M520 567H528M520 572H528M520 584H528"
      stroke={CYAN}
    />
    <Boxes
      list={[
        [77, 475, 7, 3], [94, 541, 7, 4], [105, 557, 5, 7], [291, 525, 7, 4], [478, 527, 7, 4], [490, 527, 7, 4],
        [82, 596, 8, 3], [118, 596, 7, 3], [156, 596, 7, 3], [289, 595, 10, 4], [425, 596, 8, 3],
        [194, 599, 10, 4], [386, 600, 10, 4],
        [524, 557, 5, 7], [524, 567, 5, 4], [524, 574, 5, 8], [524, 585, 5, 5],
      ]}
    />
  </g>
);

const Details = () => (
  <g fill="none" shapeRendering="crispEdges">
    <rect x="626" y="535" width="20" height="7" fill="url(#green)" />
    <rect x="631" y="571" width="10" height="6" fill="url(#green)" />
    <path d="M624 532V587M630 542V587M640 542V587M647 532V587M624 542H647M624 546H647M624 555H647M624 574H647" stroke={BLUE} />
    <path d="M671 556H717V576H671ZM671 561H717M671 571H717M692 556V576" stroke={BLUE} strokeWidth="1" />
    <path d="M739 552H772V540H797V551H808V576H739Z" fill="url(#green)" />
    <path d="M801 540H823V552H836V576H811V549H801Z" fill="url(#green)" />
    <path d="M739 551H771V539H823V551H836M798 540V550H809V577M739 577H836" stroke={NAVY} strokeWidth="2" />
    <path
      d="M644 528H659M648 528L645 535V567H714M620 533H648M623 532V576H621M623 588H648M681 574V554H698M671 577V582H715V577M717 556H720V576H717M772 537V534H824V537M797 531V537M835 540H847V576H835M835 552H847M771 582V585H824V582M798 582V587"
      stroke={CYAN}
    />
    <g shapeRendering="auto">
      <circle cx="629" cy="597" r="4" stroke={CYAN} />
    </g>
    <Boxes
      list={[
        [618, 528, 5, 4], [627, 528, 19, 3], [616, 536, 6, 4], [618, 555, 5, 7], [624, 585, 6, 3], [632, 585, 6, 3], [642, 585, 6, 3],
        [716, 562, 4, 7], [689, 578, 7, 3], [780, 530, 7, 3], [800, 530, 4, 3], [808, 530, 7, 3],
        [843, 543, 4, 7], [843, 561, 4, 7], [780, 581, 7, 3], [799, 581, 6, 3], [813, 581, 7, 3], [811, 586, 5, 4],
      ]}
    />
  </g>
);

const TEXT_CYAN = "#14e0e0";
const TEXT_GREEN = "#5cc41c";

const LABELS = [
  [142, 178, "1", TEXT_GREEN], [143, 404, "1", TEXT_GREEN], [420, 181, "2", TEXT_GREEN], [420, 400, "2", TEXT_GREEN],
  [346, 260, "A", TEXT_GREEN], [344, 275, "15", TEXT_GREEN],
  [74, 392, "1", TEXT_CYAN], [178, 392, "2", TEXT_CYAN], [86, 391, "砖基础", TEXT_CYAN], [190, 393, "毛石基础", TEXT_CYAN],
  [237, 401, "立面", TEXT_CYAN], [686, 174, "1:2水泥砂浆压顶", TEXT_CYAN],
  [231, 621, "平面", "#3bd014"],
  [630, 448, "注:", TEXT_CYAN], [644, 448, "1.围墙材料可为实心及空心砖、饰面材料", TEXT_CYAN],
  [644, 457, "有设计认定;", TEXT_CYAN], [644, 466, "2.围墙勒脚饰面材料由设计人定:", TEXT_CYAN],
  [644, 477, "3.围墙高度", TEXT_CYAN], [644, 488, "4.预制混凝土压顶板采用C20混凝土", TEXT_CYAN],
  [667, 591, "预制混凝土压顶板", TEXT_CYAN], [777, 600, "伸缩缝平面", TEXT_CYAN], [627, 600, "A", TEXT_CYAN],
];

const Compass = () => (
  <g fontFamily='"Noto Sans CJK SC", sans-serif' fontSize="13" textAnchor="middle" fill="#a3a7ab">
    <circle cx="907" cy="158" r="35" fill="none" stroke="#454b54" strokeWidth="8" />
    <rect x="890" y="141" width="33" height="33" fill="#a9adb0" />
    <text x="907" y="165" fontSize="20" fontWeight="300" fill="#6d7276">上</text>
    <text x="907" y="127">北</text>
    <text x="907" y="201">南</text>
    <text x="870" y="163">西</text>
    <text x="943" y="163">东</text>
    <rect x="891" y="215" width="31" height="11" rx="2" fill="#8f939b" />
    <text x="902" y="223" fontSize="7" fontFamily="Liberation Sans, sans-serif" fill="#dcdfe3">WCS</text>
  </g>
);

const ModelSpace = () => (
  <Canvas viewBox="21 105 939 813" role="img" aria-label="模型">
    <defs>
      <pattern id="hatch" width="10" height="10" patternUnits="userSpaceOnUse">
        <rect width="10" height="10" fill="#1f2c26" />
        <path d="M-1 11L11 -1M-1 1L1 -1M9 11L11 9" stroke="#5f9a30" shapeRendering="auto" />
      </pattern>
      <pattern id="hatchFine" width="5" height="5" patternUnits="userSpaceOnUse">
        <rect width="5" height="5" fill="#1f3020" />
        <path d="M-1 6L6 -1M-1 1L1 -1M4 6L6 4" stroke="#6a9a20" shapeRendering="auto" />
      </pattern>
      <pattern id="green" width="3" height="3" patternUnits="userSpaceOnUse">
        <rect width="3" height="3" fill="#2f6b1c" />
        <path d="M0 3L3 0" stroke="#3f9a1c" />
      </pattern>
      <pattern id="gravel" width="11" height="8" patternUnits="userSpaceOnUse">
        <rect width="11" height="8" fill="#1c2b1c" />
        <path d="M0 2l3 2 2-3M6 3l3-2 2 2M1 7l3-2 2 2M7 6l2 1 2-2M5 4h2" fill="none" stroke="#7fae36" shapeRendering="auto" />
      </pattern>
    </defs>
    <g fill="none" shapeRendering="crispEdges">
      <path d={minorGrid} stroke="#252d36" />
      <path d={majorGrid} stroke="#2e363f" />
      <path d="M21 688H960" stroke="#5c1d26" />
    </g>
    <Elevation />
    <Sections />
    <Plan />
    <Details />
    <g fontFamily='"Liberation Sans", "Noto Sans CJK SC", sans-serif' fontSize="7" fontWeight="500">
      {LABELS.map(([x, y, text, fill]) => (
        <text key={`${x}-${y}`} x={x} y={y} fill={fill}>
          {text}
        </text>
      ))}
      <text x="681" y="477" fontSize="9" fill={TEXT_CYAN}>≤2400;</text>
      <g fontSize="8" fill={TEXT_CYAN}>
        <text x="644" y="527">3Ø6</text>
        <text x="683" y="553">3Ø6</text>
        <text x="655" y="566">3Ø6</text>
      </g>
    </g>
    <text x="23" y="117" fontSize="8" fill="#d2d6da" fontFamily='"Liberation Sans", "Noto Sans CJK SC", sans-serif'>
      [–][俯视][二维线框]
    </text>
    <Compass />
    <g fill="none" stroke="#d2d4d6" shapeRendering="crispEdges">
      <path d="M502 707H586M544 665V749M542 705H546V709H542Z" />
      <path d="M40 866V899H72M37 895H43V902H37Z" stroke="#a8acb0" />
    </g>
    <path d="M41 855L45 860L49 855M45 860V864M75 889L84 898M84 889L75 898" fill="none" stroke="#a8acb0" />
  </Canvas>
);

/* ---- chrome data ---- */

const MENUS = ["文件(F)", "编辑(E)", "视图(V)", "插入(I)", "格式(O)", "工具(T)", "绘图(D)", "标注(N)", "修改(M)", "参数(P)", "窗口(W)", "帮助(H)"];
const STANDARD = "file open save | printer preview plot globe | cut copy paste match block | undo v redo v | hand zoom zoomWin zoomPrev | props center palette sheet markup calc | help";
const DIMENSION = "dimLinear dimAligned dimArc dimOrd | radius jog diameter angular | quick baseline cont space brk | toler centerMark inspect jogLine | dimEdit textEdit update |";
const DRAW = "line xline pline polygon rect arc circle cloud spline ellipse ellArc insert makeBlock point hatch gradient region table mtext addSel";
const MODIFY = "erase copyObj mirror offset array move rotate scale stretch trim extend breakPt breakObj join chamfer fillet blend explode";
const ORDER = "front back above under annot hatchBack";
const STATUS = "snap corner grid ortho polar osnap osnap3 otrack ducs dyn lwt tpy qp sc am";
const STATUS_ON = ["snap", "corner", "osnap", "otrack", "ducs", "dyn", "tpy"];

const Caret = ({ color = "#444" }) => (
  <Svg $size={5} viewBox="0 0 5 5" aria-hidden="true">
    <path d="M0 1H5L2.500 4Z" fill={color} />
  </Svg>
);

const More = () => (
  <Svg $size={8} viewBox="0 0 8 8" aria-hidden="true">
    <path d="M0 1L4 4L0 7ZM4 1L8 4L4 7Z" fill="#111" />
  </Svg>
);

const Tools = ({ list, size }) =>
  list.split(" ").map((name, i) => {
    if (name === "|") return <Divider key={i} />;
    if (name === "v")
      return (
        <ToolButton key={i} $width={8} aria-label="more">
          <Caret />
        </ToolButton>
      );
    return (
      <ToolButton key={i} aria-label={name}>
        <Icon name={name} size={size} />
      </ToolButton>
    );
  });

const Dropdown = ({ label, value, width, pad, mono, disabled, children }) => (
  <Combo $width={width} $pad={pad} $off={disabled}>
    {children}
    <Select aria-label={label} $mono={mono} disabled={disabled} defaultValue={value}>
      <option>{value}</option>
    </Select>
    <Chevron />
  </Combo>
);

const Header = () => (
  <>
    <TitleBar>
      <AppButton aria-label="AutoCAD">
        <Svg $size={17} viewBox="0 0 18 18">
          <path d="M7 1H11L17 16H12L9 11L4 16H0Z" fill="#c4261a" />
          <path d="M7 1L9 11L4 16H0Z" fill="#ea4a34" />
          <path d="M9 6L12 12L6 13Z" fill="#6c100a" />
        </Svg>
        <Caret />
      </AppButton>
      <QuickAccess>
        {["file", "open", "save", "editSave", "printer", "undo"].map((n) => (
          <QuickButton key={n} aria-label={n}>
            <Icon name={n} size={17} />
          </QuickButton>
        ))}
        <QuickButton $narrow aria-label="redo list">
          <Caret color="#666" />
        </QuickButton>
        <QuickButton $narrow aria-label="more">
          <More />
        </QuickButton>
      </QuickAccess>
      <Title>建工143周俊波141409040432....</Title>
      <InfoCenter>
        <QuickButton $narrow aria-label="expand">
          <Svg $size={7} viewBox="0 0 8 8">
            <path d="M2 0L7 4L2 8Z" fill="#111" />
          </Svg>
        </QuickButton>
        <Search aria-label="search" placeholder="键入关键字或短语" />
        <QuickButton aria-label="find">
          <Icon name="binoculars" size={17} />
        </QuickButton>
        <SignIn>
          <Icon name="user" size={15} />
          登录
        </SignIn>
        <QuickButton $narrow aria-label="account">
          <Caret />
        </QuickButton>
        <QuickButton aria-label="exchange">
          <Icon name="exchange" size={15} />
        </QuickButton>
        <QuickButton aria-label="updates">
          <Icon name="cloudDown" size={17} />
        </QuickButton>
        <QuickButton aria-label="update list">
          <Caret />
        </QuickButton>
        <QuickButton aria-label="more">
          <More />
        </QuickButton>
      </InfoCenter>
      <WindowButtons>
        {["M0 6H11", "M1 1H11V11H1Z", "M1 1L11 11M11 1L1 11"].map((d) => (
          <WindowButton key={d} aria-label="window">
            <Svg $size={12} viewBox="0 0 12 12">
              <path d={d} fill="none" stroke="#aaa" />
            </Svg>
          </WindowButton>
        ))}
      </WindowButtons>
    </TitleBar>
    <MenuBar>
      {MENUS.map((m) => (
        <MenuLink key={m} href="#">
          {m}
        </MenuLink>
      ))}
      <DocButtons>
        {["M1 8H8", "M3 1H9V6H3ZM1 4H6V8H1Z", "M2 2L7 7M7 2L2 7"].map((d) => (
          <GripButton key={d} aria-label="document">
            <Svg $size={9} viewBox="0 0 10 10">
              <path d={d} fill="none" stroke="#1c1c1c" strokeWidth="1.300" />
            </Svg>
          </GripButton>
        ))}
      </DocButtons>
    </MenuBar>
    <ToolbarArea>
      <ToolbarRow>
        <Toolbar>
          <Tools list={STANDARD} />
        </Toolbar>
        <Toolbar>
          <Tools list="styleA" />
          <Dropdown label="text style" value="样式 1" width={75} pad={10} />
          <Divider />
          <Tools list="brush" />
          <Dropdown label="dimension style" value="ISO-25" width={79} pad={12} />
          <Divider />
          <Tools list="tableStyle" />
          <Dropdown label="table style" value="Standard" width={75} pad={2} />
          <Divider />
          <Tools list="leader" />
          <Dropdown label="leader style" value="Standar" width={77} pad={12} />
        </Toolbar>
      </ToolbarRow>
      <ToolbarRow>
        <Toolbar>
          <Tools list={DIMENSION} />
          <Dropdown label="current dimension style" value="ISO-25" width={76} pad={10} />
          <Tools list="brush" />
        </Toolbar>
      </ToolbarRow>
      <ToolbarRow>
        <Toolbar>
          <Dropdown label="workspace" value="AutoCAD 经典" width={113} pad={6} />
          <Tools list="gear space2" />
        </Toolbar>
        <Toolbar>
          <Tools list="layers" />
          <Dropdown label="layer" value="标注" width={194} pad={2}>
            <Icon name="bulb" size={10} />
            <Icon name="sun" size={11} />
            <Icon name="faint" size={11} />
            <Icon name="lock" size={11} />
            <Swatch />
          </Dropdown>
          <Tools list="layerA layerB layers" />
        </Toolbar>
        <Toolbar>
          <Dropdown label="color" value="ByLayer" width={94} mono>
            <Swatch />
          </Dropdown>
          <Divider />
          <Dropdown label="linetype" value="ByLayer" width={104} mono>
            <LinePreview $width={40} />
          </Dropdown>
          <Divider />
          <Dropdown label="lineweight" value="B...ye" width={80} mono>
            <LinePreview $width={23} />
          </Dropdown>
          <Divider />
          <Dropdown label="plot style" value="ByColor" width={77} pad={5} mono disabled />
        </Toolbar>
      </ToolbarRow>
    </ToolbarArea>
  </>
);

const STEPS = ["M2 1V9M8 1L4 5L8 9Z", "M7 1L3 5L7 9Z", "M3 1L7 5L3 9Z", "M2 1L6 5L2 9ZM8 1V9"];

const App = () => (
  <Page>
    <GlobalStyle />
    <Header />
    <Workspace>
      <Dock $width={20}>
        <Palette $height={290}>
          <Tools list={DRAW} />
        </Palette>
      </Dock>
      <Viewport>
        <ModelSpace />
        <TabBar>
          {STEPS.map((d) => (
            <StepButton key={d} aria-label="layout step">
              <Svg $size={9} viewBox="0 0 10 10">
                <path d={d} fill="#555" stroke="#555" />
              </Svg>
            </StepButton>
          ))}
          <Tab $active>模型</Tab>
          <Tab>布局1</Tab>
          <Slash />
          <Tab>布局2</Tab>
          <Slash />
          <HScroll>
            <Svg $size={8} viewBox="0 0 8 8">
              <path d="M5 1L2 4L5 7" fill="none" stroke="#333" />
            </Svg>
          </HScroll>
        </TabBar>
      </Viewport>
      <ScrollTrack>
        <Svg $size={9} viewBox="0 0 10 10">
          <path d="M1 7L5 3L9 7" fill="none" stroke="#333" strokeWidth="1.500" />
        </Svg>
        <ScrollThumb />
      </ScrollTrack>
      <Dock $width={21}>
        <Palette $height={261}>
          <Tools list={MODIFY} />
        </Palette>
        <Palette $height={91}>
          <Tools list={ORDER} />
        </Palette>
      </Dock>
    </Workspace>
    <CommandLine>
      <CommandGrip>
        <Dots />
        <GripButton $gap={4} aria-label="close">
          <Svg $size={9} viewBox="0 0 10 10">
            <path d="M1 1L9 9M9 1L1 9" stroke="#fff" strokeWidth="2" />
          </Svg>
        </GripButton>
        <GripButton aria-label="customize">
          <Icon name="wrench" size={14} />
        </GripButton>
      </CommandGrip>
      <PromptButton aria-label="recent commands">
        <Icon name="prompt" size={16} />
        <Caret color="#777" />
      </PromptButton>
      <CommandInput aria-label="command" placeholder="键入命令" />
    </CommandLine>
    <StatusBar>
      <Coords>5729.2101, -189.8985 , 0.0000</Coords>
      <StatusGroup>
        {STATUS.split(" ").map((n) => (
          <StatusButton key={n} $on={STATUS_ON.includes(n)} aria-label={n}>
            <Icon name={n} size={12} />
          </StatusButton>
        ))}
      </StatusGroup>
      <ModelGroup>
        <ModelButton>模型</ModelButton>
        <ModelButton aria-label="layout">
          <Icon name="model" size={12} />
        </ModelButton>
      </ModelGroup>
    </StatusBar>
    <Watermark>
      <Svg $size={80} viewBox="385 130 240 240">
        <path d="M402 240C440 160 600 125 622 200C627 220 618 235 612 240C613 190 570 165 520 172C460 180 420 215 402 240Z" fill="#93c11f" />
        <path d="M390 262C388 300 405 320 445 320C520 322 590 290 624 236C605 310 520 352 455 350C400 348 378 310 390 262Z" fill="#12388f" />
        <path d="M402 270L440 255V310L415 306ZM458 205L500 187V312H458ZM523 250L558 232V295L523 305Z" fill="#1b459c" />
        <path d="M505 190L545 210V232L520 244V305L505 310ZM562 238L598 245L562 280ZM444 256L454 262V310H444Z" fill="#d5d7da" />
      </Svg>
      <BrandText>
        <BrandName>土木工程网</BrandName>
        <BrandUrl>www.civilcn.com</BrandUrl>
      </BrandText>
    </Watermark>
  </Page>
);

export default App;
